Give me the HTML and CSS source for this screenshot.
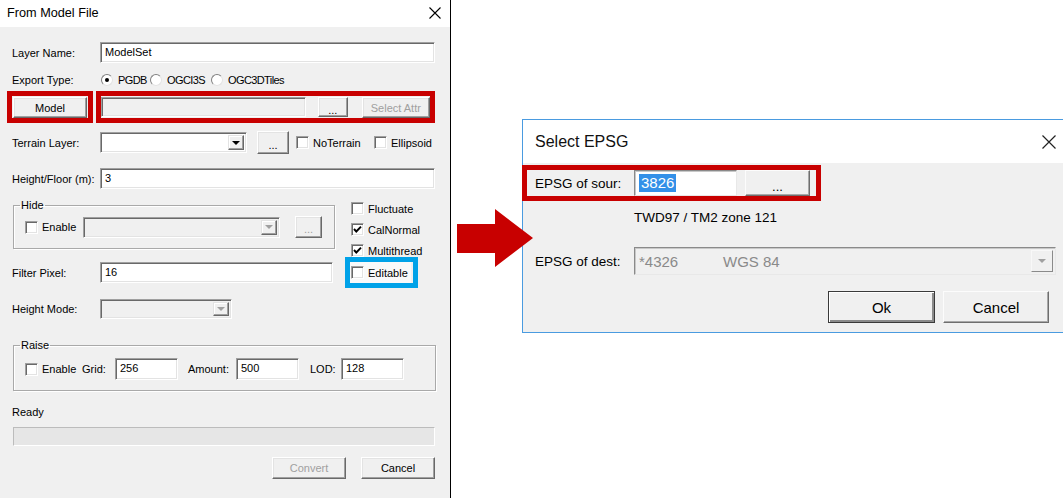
FILE: index.html
```html
<!DOCTYPE html>
<html>
<head>
<meta charset="utf-8">
<link rel="stylesheet" href="styles.css">
</head>
<body>
<div class="desk">
  <section class="dlg-l">
    <header class="tb-l">
      <span class="tb-title">From Model File</span>
      <svg class="x-l" width="12" height="12" viewBox="0 0 12 12"><path d="M0.5 0.5 L11.5 11.5 M11.5 0.5 L0.5 11.5" stroke="#000" stroke-width="1.1" fill="none"/></svg>
    </header>
    <div class="bd-l">
      <div class="row r1"><span class="lbl">Layer Name:</span><div class="field f-wide">ModelSet</div></div>
      <div class="row r2"><span class="lbl">Export Type:</span>
        <span class="radio on"></span><span class="rtxt t-pgdb">PGDB</span>
        <span class="radio"></span><span class="rtxt t-i3s">OGCI3S</span>
        <span class="radio"></span><span class="rtxt">OGC3DTiles</span>
      </div>
      <div class="row r3">
        <div class="redbox rb-model"><div class="btn b-model">Model</div></div>
        <div class="redbox rb-path">
          <div class="field dis f-path"></div>
          <div class="btn b-dots">...</div>
          <div class="btn b-attr dtx">Select Attr</div>
        </div>
      </div>
      <div class="row r4"><span class="lbl">Terrain Layer:</span>
        <div class="field combo c-terrain"><span class="dd"><i class="tri"></i></span></div>
        <div class="btn b-tdots">...</div>
        <span class="chk c-nt"></span><span class="ctxt t-nt">NoTerrain</span>
        <span class="chk"></span><span class="ctxt">Ellipsoid</span>
      </div>
      <div class="row r5"><span class="lbl">Height/Floor (m):</span><div class="field f-wide">3</div></div>
      <div class="mid">
        <div class="mid-l">
          <fieldset class="grp g-hide"><legend>Hide</legend>
            <div class="grow">
              <span class="chk"></span><span class="ctxt t-en">Enable</span>
              <div class="field combo dis c-hide"><span class="dd"><i class="tri dis"></i></span></div>
              <div class="btn b-hdots dtx">...</div>
            </div>
          </fieldset>
          <div class="row r-filter"><span class="lbl">Filter Pixel:</span><div class="field f-filter">16</div></div>
          <div class="row r-hm"><span class="lbl">Height Mode:</span><div class="field combo dis c-hm"><span class="dd"><i class="tri dis"></i></span></div></div>
        </div>
        <div class="mid-r">
          <div class="crow"><span class="chk"></span><span class="ctxt">Fluctuate</span></div>
          <div class="crow"><span class="chk"><svg viewBox="0 0 11 11" width="11" height="11"><path d="M2 5 L4.3 7.5 L9 2.6" stroke="#000" stroke-width="1.9" fill="none"/></svg></span><span class="ctxt">CalNormal</span></div>
          <div class="crow"><span class="chk"><svg viewBox="0 0 11 11" width="11" height="11"><path d="M2 5 L4.3 7.5 L9 2.6" stroke="#000" stroke-width="1.9" fill="none"/></svg></span><span class="ctxt">Multithread</span></div>
          <div class="bluebox"><div class="crow c-edit"><span class="chk"></span><span class="ctxt">Editable</span></div></div>
        </div>
      </div>
      <fieldset class="grp g-raise"><legend>Raise</legend>
        <div class="grow">
          <span class="chk"></span><span class="ctxt t-en">Enable</span>
          <span class="t-grid">Grid:</span><div class="field f-num">256</div>
          <span class="t-amt">Amount:</span><div class="field f-num">500</div>
          <span class="t-lod">LOD:</span><div class="field f-num">128</div>
        </div>
      </fieldset>
      <div class="ready">Ready</div>
      <div class="progress"></div>
      <div class="btns-l"><div class="btn b-l dtx">Convert</div><div class="btn b-l">Cancel</div></div>
    </div>
  </section>

  <svg class="arrow" width="77" height="58" viewBox="0 0 77 58"><path d="M0 15 H38 V0 L76 29 L38 58 V44 H0 Z" fill="#c80000"/></svg>

  <section class="dlg-r">
    <header class="tb-r">
      <span class="tb-rtitle">Select EPSG</span>
      <svg class="x-r" width="14" height="14" viewBox="0 0 14 14"><path d="M0.5 0.5 L13.5 13.5 M13.5 0.5 L0.5 13.5" stroke="#222" stroke-width="1.2" fill="none"/></svg>
    </header>
    <div class="redbox rb-src">
      <span class="rlbl">EPSG of sour:</span>
      <div class="rfield"><span class="sel">3826</span></div>
      <div class="rbtn rb-dots">...</div>
    </div>
    <div class="twd">TWD97 / TM2 zone 121</div>
    <div class="rrow">
      <span class="rlbl">EPSG of dest:</span>
      <div class="rfield rcombo"><span class="g1">*4326</span><span class="g2">WGS 84</span><span class="rdd"><i class="tri dis"></i></span></div>
    </div>
    <div class="rbtns"><div class="rbtn rb-ok">Ok</div><div class="rbtn rb-cancel">Cancel</div></div>
  </section>
</div>
</body>
</html>
```

FILE: styles.css
```css
html, body { margin: 0; padding: 0; }
body { width: 1063px; height: 498px; overflow: hidden; background: #fff; font-family: "Liberation Sans", Arial, sans-serif; font-size: 11px; color: #000; }
.desk { position: relative; display: flex; align-items: flex-start; width: 1063px; height: 498px; }

/* ---------- left dialog ---------- */
.dlg-l { width: 450px; height: 498px; flex-shrink: 0; background: #f0f0f0; border-right: 1px solid #000; display: flex; flex-direction: column; }
.tb-l { height: 27px; background: #fff; display: flex; align-items: center; justify-content: space-between; padding: 0 9px 0 7px; flex-shrink: 0; }
.tb-title { font-size: 12.7px; color: #000; margin-top: -2px; }
.x-l { margin-top: -2px; }
.bd-l { padding: 0 15px 0 12px; display: flex; flex-direction: column; }

.row { display: flex; align-items: center; }
.lbl { width: 88px; flex-shrink: 0; }
.r1 { margin-top: 15px; height: 21px; }
.r2 { margin-top: 7px; height: 20px; }
.r3 { margin-top: 1px; margin-left: -5px; height: 32px; }
.r4 { margin-top: 8px; height: 23px; }
.r5 { margin-top: 14px; height: 21px; }

.field { box-sizing: border-box; background: #fff; border: 1px solid; border-color: #a0a0a0 #fff #fff #a0a0a0; box-shadow: inset 1px 1px 0 #696969, inset -1px -1px 0 #e3e3e3; padding: 2px 0 0 4px; line-height: 14px; }
.field.dis { background: #f0f0f0; }
.f-wide { width: 335px; height: 21px; }

.radio { box-sizing: border-box; width: 12px; height: 12px; flex-shrink: 0; border-radius: 50%; background: #fff; border: 1px solid; border-color: #808080 #e3e3e3 #e3e3e3 #808080; margin-left: 1px; display: flex; align-items: center; justify-content: center; }
.radio.on::after { content: ""; width: 4px; height: 4px; border-radius: 50%; background: #000; }
.rtxt { margin-left: 5px; letter-spacing: -0.6px; white-space: nowrap; }
.t-pgdb { width: 31px; }
.t-i3s { width: 43px; }

.redbox { box-sizing: border-box; border: 5px solid #c80000; height: 32px; }
.rb-model { width: 86px; padding: 1px 0 0 1px; }
.rb-path { width: 340px; margin-left: 3px; display: flex; align-items: flex-start; padding-top: 1px; }

.btn { box-sizing: border-box; background: #f0f0f0; border: 1px solid; border-color: #fff #696969 #696969 #fff; box-shadow: inset -1px -1px 0 #a0a0a0, inset 1px 1px 0 #e3e3e3; display: flex; align-items: center; justify-content: center; }
.dtx { color: #a0a0a0; }
.b-model { width: 74px; height: 21px; }
.f-path { width: 205px; height: 20px; }
.b-dots { width: 30px; height: 20px; margin-left: 12px; padding-top: 5px; }
.b-attr { width: 68px; height: 21px; margin-left: 14px; }

.combo { display: flex; justify-content: flex-end; align-items: stretch; padding: 2px; }
.dd { width: 16px; box-sizing: border-box; background: #f0f0f0; border: 1px solid; border-color: #e3e3e3 #696969 #696969 #e3e3e3; box-shadow: inset -1px -1px 0 #a0a0a0, inset 1px 1px 0 #fff; display: flex; align-items: center; justify-content: center; }
.tri { display: block; width: 0; height: 0; border-left: 4px solid transparent; border-right: 4px solid transparent; border-top: 4px solid #000; }
.tri.dis { border-top-color: #a0a0a0; }
.c-terrain { width: 147px; height: 21px; }
.b-tdots { width: 32px; height: 23px; margin-left: 10px; padding-top: 4px; }
.chk { box-sizing: border-box; width: 13px; height: 13px; flex-shrink: 0; background: #fff; border: 1px solid; border-color: #a0a0a0 #fff #fff #a0a0a0; box-shadow: inset 1px 1px 0 #696969, inset -1px -1px 0 #e3e3e3; display: flex; align-items: center; justify-content: center; }
.chk svg { display: block; }
.c-nt { margin-left: 7px; }
.ctxt { margin-left: 4px; }
.t-nt { width: 61px; }

.mid { display: flex; margin-top: 10px; }
.mid-l { width: 323px; display: flex; flex-direction: column; }
.mid-r { margin-left: 10px; display: flex; flex-direction: column; margin-top: -1px; }

.grp { margin: 0 0 0 1px; border: 1px solid #a9a9a9; box-shadow: 1px 1px 0 #fff, inset 1px 1px 0 #fff; padding: 0 0 10px 11px; min-width: 0; }
.grp legend { padding: 0 1px; margin-left: -5px; line-height: 12px; font-size: 11px; }
.g-hide { width: 322px; box-sizing: border-box; }
.grow { display: flex; align-items: center; height: 22px; margin-top: 5px; }
.t-en { width: 34px; }
.c-hide { width: 197px; height: 21px; margin-left: 7px; }
.b-hdots { width: 27px; height: 22px; margin-left: 15px; padding-top: 4px; }

.r-filter { margin-top: 13px; height: 21px; }
.f-filter { width: 233px; height: 21px; }
.r-hm { margin-top: 16px; height: 20px; }
.c-hm { width: 132px; height: 20px; }

.crow { display: flex; align-items: center; height: 21px; padding-left: 6px; }
.bluebox { box-sizing: border-box; width: 73px; border: 5px solid #00a2e8; margin-top: -4px; }
.c-edit { padding-left: 1px; background: #f9f9f9; height: 21px; margin-right: 2px; }

.g-raise { width: 423px; box-sizing: border-box; margin-top: 20px; }
.g-raise .grow { margin-top: 7px; }
.t-grid { margin-left: 6px; width: 33px; }
.f-num { width: 63px; height: 22px; }
.t-amt { margin-left: 10px; width: 48px; }
.t-lod { margin-left: 11px; width: 31px; }

.ready { margin-top: 14px; line-height: 14px; }
.progress { margin: 8px 0 0 1px; height: 19px; width: 422px; box-sizing: border-box; background: #e6e6e6; border: 1px solid; border-color: #bcbcbc #fff #fff #bcbcbc; }
.btns-l { display: flex; justify-content: flex-end; margin-top: 11px; }
.b-l { width: 74px; height: 22px; margin-left: 15px; }

/* ---------- arrow ---------- */
.arrow { position: absolute; left: 457px; top: 209px; z-index: 2; }

/* ---------- right dialog ---------- */
.dlg-r { flex-shrink: 0; width: 550px; height: 214px; box-sizing: border-box; margin: 119px 0 0 71px; border: 1px solid #4a9be0; background: #f0f0f0; font-size: 13.5px; }
.tb-r { height: 43px; background: #fff; display: flex; align-items: center; justify-content: space-between; padding: 0 15px 0 12px; }
.tb-rtitle { font-size: 16px; color: #111; }
.rb-src { height: 36px; width: 299px; margin: 2px 0 0 -1px; display: flex; align-items: stretch; padding-left: 8px; }
.rlbl { width: 99px; flex-shrink: 0; display: flex; align-items: center; color: #000; }
.rfield { box-sizing: border-box; background: #fff; border: 1px solid; border-color: #8a8a8a #e8e8e8 #e8e8e8 #8a8a8a; box-shadow: inset 1px 1px 0 #c8c8c8; display: flex; align-items: center; font-size: 15px; }
.rb-src .rfield { width: 103px; padding-left: 4px; }
.sel { background: #3390e8; color: #fff; padding: 0 2px; line-height: 18px; }
.rbtn { box-sizing: border-box; background: #f0f0f0; border: 1px solid; border-color: #fcfcfc #6e6e6e #6e6e6e #fcfcfc; box-shadow: inset -1px -1px 0 #a8a8a8; display: flex; align-items: center; justify-content: center; font-size: 15px; color: #000; }
.rb-dots { width: 65px; margin-left: 8px; padding-top: 6px; font-size: 13px; }
.twd { margin-top: 8px; padding-left: 111px; line-height: 18px; color: #000; }
.rrow { display: flex; margin-top: 20px; padding-left: 12px; height: 28px; }
.rcombo { width: 422px; background: #f0f0f0; padding: 2px 2px 2px 4px; color: #8a8a8a; align-items: stretch; }
.g1, .g2 { display: flex; align-items: center; }
.g1 { width: 84px; }
.g2 { flex: 1; }
.rdd { width: 22px; box-sizing: border-box; background: #f0f0f0; border: 1px solid; border-color: #f8f8f8 #8a8a8a #8a8a8a #f8f8f8; display: flex; align-items: center; justify-content: center; }
.rbtns { display: flex; margin: 16px 0 0 305px; }
.rbtns .rbtn { height: 32px; }
.rb-ok { width: 107px; border-color: #3a3a3a; box-shadow: inset 1px 1px 0 #fff, inset -2px -2px 0 #8a8a8a; }
.rb-cancel { width: 106px; margin-left: 8px; }
```
